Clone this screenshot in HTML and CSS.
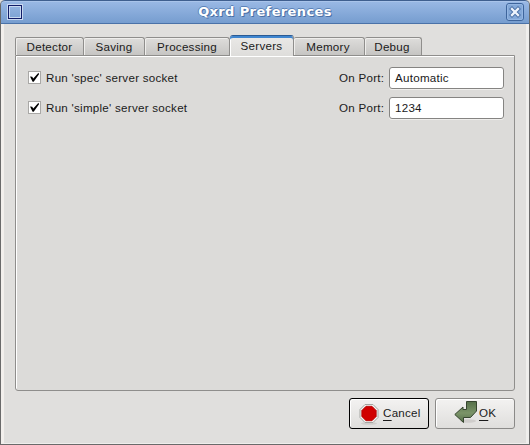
FILE: index.html
```html
<!DOCTYPE html>
<html lang="en">
<head>
<meta charset="utf-8">
<title>Qxrd Preferences</title>
<link rel="stylesheet" href="styles.css">
</head>
<body>
<div class="window">
  <header class="titlebar">
    <svg class="app-icon" width="16" height="16" viewBox="0 0 16 16"><rect x="1.5" y="1.5" width="13" height="13" fill="none" stroke="#c8d8f0" stroke-width="3"/><rect x="1.5" y="1.5" width="13" height="13" fill="none" stroke="#101c68" stroke-width="1"/></svg>
    <h1 class="title">Qxrd Preferences</h1>
    <button class="close" aria-label="Close"><svg width="18" height="18" viewBox="0 0 18 18"><rect x=".5" y=".5" width="17" height="17" rx="2.5" fill="#83a8d8" stroke="#3e659c"/><rect x="1.500" y="1.500" width="15" height="15" rx="1.5" fill="none" stroke="#94b6e2"/><path d="M6 6l6 6M12 6l-6 6" stroke="#4a70a6" stroke-width="4.2" stroke-linecap="square"/><path d="M6 6l6 6M12 6l-6 6" stroke="#eef4fc" stroke-width="2.3" stroke-linecap="square"/></svg></button>
  </header>
  <main class="content">
    <nav class="tabs">
      <span class="tab t-detector">Detector</span>
      <span class="tab t-saving">Saving</span>
      <span class="tab t-processing">Processing</span>
      <span class="tab t-servers active">Servers</span>
      <span class="tab t-memory">Memory</span>
      <span class="tab t-debug">Debug</span>
    </nav>
    <section class="panel">
      <div class="row">
        <span class="check"><svg width="13" height="13" viewBox="0 0 13 13"><path d="M2 5.600L4.200 5.800L5.300 7.400L10.500 1.700L11 3.200L5.700 10.700H4.600z" fill="#000"/></svg></span>
        <span class="label">Run 'spec' server socket</span>
        <span class="port">On Port:</span>
        <span class="field">Automatic</span>
      </div>
      <div class="row">
        <span class="check"><svg width="13" height="13" viewBox="0 0 13 13"><path d="M2 5.600L4.200 5.800L5.300 7.400L10.500 1.700L11 3.200L5.700 10.700H4.600z" fill="#000"/></svg></span>
        <span class="label">Run 'simple' server socket</span>
        <span class="port">On Port:</span>
        <span class="field">1234</span>
      </div>
    </section>
    <footer class="actions">
      <button class="btn cancel">
        <svg width="22" height="22" viewBox="0 0 22 22"><ellipse cx="11" cy="20.500" rx="8" ry="1.300" fill="#cfcdcb"/><path d="M7 1.5h8l5 5v8l-5 5H7l-5-5v-8z" fill="#f4f4f2" stroke="#a4a6a2"/><path d="M8 3.300h6l4.200 4.200v6L14 17.700H8l-4.200-4.200v-6z" fill="#d00000" stroke="#b40000" stroke-width=".8"/></svg>
        <span class="text"><u>C</u>ancel</span>
      </button>
      <button class="btn ok">
        <svg width="24" height="24" viewBox="0 0 24 24"><defs><linearGradient id="g" x1="0" y1="0" x2="0" y2="1"><stop offset="0" stop-color="#56704a"/><stop offset=".55" stop-color="#7b9468"/><stop offset="1" stop-color="#56704a"/></linearGradient></defs><ellipse cx="14" cy="21" rx="8" ry="1.8" fill="#cfcdcb"/><path d="M12.500 1.500h10v9.500l-6 6.500H9.500V22.500L.8 14.500l8.200-7.500V9.500h3.500z" fill="url(#g)" stroke="#36452f" stroke-linejoin="round"/></svg>
        <span class="text"><u>O</u>K</span>
      </button>
    </footer>
  </main>
</div>
</body>
</html>
```
FILE: styles.css
```css
* { box-sizing: border-box; }
body {
  margin: 0;
  background: #dedddb;
  color: #1a1a1a;
  font: 11.6px/14px "Liberation Sans", sans-serif;
  letter-spacing: 0.26px;
}
.window {
  width: 530px;
  height: 445px;
  display: flex;
  flex-direction: column;
  overflow: hidden;
  border: 1px solid #6a6a6a;
  border-top: 0;
  border-radius: 5px 5px 0 0;
  background: #e0dfdd;
}
.titlebar {
  flex: none;
  height: 24px;
  margin: 0 -1px;
  padding: 0 5px 0 7px;
  display: flex;
  align-items: center;
  background: linear-gradient(#9ab9e5, #769dcf);
  border: 1px solid #3f5f8f;
  border-bottom-color: #4a72a8;
  border-radius: 5px 5px 0 0;
  box-shadow: inset 0 1px #a9c4ea;
}
.app-icon { flex: none; margin-left: -1px; }
.title {
  flex: 1;
  margin: 0;
  padding-left: 1px;
  text-align: center;
  font: bold 13px/16px "DejaVu Sans", sans-serif;
  letter-spacing: 0.38px;
  color: #fff;
  text-shadow: 1px 1px #4a70a6, -1px 0 #5c83b8, 0 -1px #5c83b8;
}
.close { flex: none; width: 18px; height: 18px; padding: 0; border: 0; background: none; }
.close svg { display: block; }
.content {
  flex: 1;
  display: flex;
  flex-direction: column;
  padding: 11px 11px 14px 11px;
  border: solid #efeeec;
  border-width: 0 3px 2px;
  border-left-color: #f2efec;
  width: 528px;
}
.tabs { display: flex; align-items: flex-end; height: 20px; position: relative; }
.tab {
  display: flex;
  justify-content: center;
  align-items: center;
  height: 18px;
  padding-top: 1px;
  border: 1px solid #8f8e8c;
  border-width: 1px 1px 0 0;
  border-radius: 2px 3px 0 0;
  background: linear-gradient(#dedddb, #c6c5c3);
  box-shadow: inset 1px 1px #efeeec;
}
.t-detector { width: 69px; border-left-width: 1px; }
.t-saving { width: 61px; }
.t-processing { width: 85px; }
.t-servers { width: 64px; }
.t-memory { width: 71px; padding-right: 2px; }
.t-debug { width: 57px; padding-right: 2px; }
.tab.active {
  height: 21px;
  margin-bottom: -1px;
  padding-bottom: 1px;
  padding-top: 0;
  border-top: 1px solid #2a5b94;
  border-radius: 3px 3px 0 0;
  background: linear-gradient(#eae9e7, #dedddb);
  box-shadow: inset 0 2px #3f86d0, inset 1px 0 #fff;
}
.panel {
  width: 500px;
  height: 336px;
  padding: 11px 0 0 12px;
  border: 1px solid #8f8e8c;
  border-radius: 0 0 3px 3px;
  box-shadow: inset 1px 1px #fff;
  background: #dcdbd9;
}
.row { display: flex; align-items: center; width: 476px; height: 22px; margin-bottom: 8px; }
.check { width: 13px; height: 13px; margin-top: -1px; border: 1px solid #a9a8a6; background: #fff; }
.check svg { display: block; margin: -1px; }
.label { margin-left: 5px; flex: 1; }
.port { width: 50px; white-space: nowrap; }
.field {
  width: 115px;
  height: 22px;
  padding: 3px 5px;
  border: 1px solid #858482;
  border-radius: 3px;
  background: #fff;
  box-shadow: 0 1px #efeeec;
}
.actions { display: flex; gap: 6px; margin: 7px 0 0 334px; }
.btn {
  display: flex;
  align-items: center;
  flex: none;
  width: 80px;
  height: 31px;
  padding: 0;
  color: #1a1a1a;
  font: inherit;
  letter-spacing: inherit;
  border: 1px solid #8b8a88;
  border-radius: 3px;
  background: linear-gradient(#f3f2f1, #dfdedc);
  box-shadow: inset 1px 1px #fff;
}
.btn svg { flex: none; }
.btn .text { margin-top: -1px; }
.cancel { border-color: #000; }
.cancel svg { margin-left: 8px; }
.cancel .text { margin-left: 3px; }
.ok svg { margin: -3px 0 0 18px; }
.ok .text { margin-left: 1px; }
.btn u { text-underline-offset: 3px; text-decoration-thickness: 1px; text-decoration-skip-ink: none; }
```
